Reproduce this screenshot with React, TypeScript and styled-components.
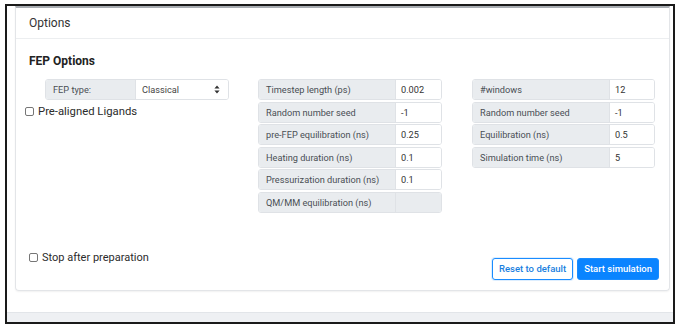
import React from "react";
import styled, { createGlobalStyle } from "styled-components";

const Global = createGlobalStyle`
  html, body { margin: 0; padding: 0; background: #fff; }
  body { font-family: Roboto, "Liberation Sans", sans-serif; color: #212529; }
  * { box-sizing: border-box; }
`;

const Frame = styled.div`
  margin: 4px 4px 0 5px;
  width: 670px;
  height: 320px;
  border: 2px solid #1a1a1a;
  background: #fff;
  display: flex;
  flex-direction: column;
  overflow: hidden;
`;

const Card = styled.div`
  margin: 0 3px 0 8px;
  border: 1px solid #e3e5e8;
  border-top: 2px solid #a9adb2;
  border-radius: 0 0 4px 4px;
  box-shadow: 0 1px 2px rgba(0, 0, 0, 0.06);
  display: flex;
  flex-direction: column;
`;

const CardHeader = styled.div`
  height: 31px;
  padding: 0 13px;
  display: flex;
  align-items: center;
  font-size: 12px;
  color: #333;
  border-bottom: 1px solid #eceef0;
`;

const CardBody = styled.div`
  padding: 15px 13px 10px 13px;
  display: flex;
  flex-direction: column;
`;

const Title = styled.div`
  font-size: 12px;
  font-weight: 700;
  color: #222;
  height: 15px;
  line-height: 15px;
  margin-bottom: 10px;
`;

const Columns = styled.div`
  display: flex;
  align-items: flex-start;
`;

const Column = styled.div<{ $w: number; $ml?: number }>`
  width: ${(p) => p.$w}px;
  margin-left: ${(p) => p.$ml ?? 0}px;
  display: flex;
  flex-direction: column;
  gap: 1.5px;
`;

const SelectGroup = styled.div`
  margin-left: 16px;
  width: 184px;
  height: 21px;
  display: flex;
  border: 1px solid #dfe2e6;
  border-radius: 3px;
  overflow: hidden;
  font-size: 9.2px;
`;

const GroupLabel = styled.div<{ $w: number; $pl?: number }>`
  width: ${(p) => p.$w}px;
  flex: none;
  background: #e9ecef;
  color: #4a4f55;
  display: flex;
  align-items: center;
  padding-left: ${(p) => p.$pl ?? 7}px;
  white-space: nowrap;
`;

const SelectBox = styled.div`
  flex: 1;
  background: #fff;
  display: flex;
  align-items: center;
  justify-content: space-between;
  padding: 0 8px 0 6px;
  color: #444;
  border-left: 1px solid #dfe2e6;
`;

const Arrows = styled.svg`
  width: 6px;
  height: 9px;
`;

const InputRow = styled.div`
  height: 21px;
  display: flex;
  border: 1px solid #dfe2e6;
  border-radius: 3px;
  overflow: hidden;
  font-size: 9.2px;
`;

const InputCell = styled.div<{ $disabled?: boolean }>`
  flex: 1;
  display: flex;
  align-items: center;
  padding-left: 5px;
  color: #333;
  background: ${(p) => (p.$disabled ? "#e9ecef" : "#fff")};
  border-left: 1px solid #dfe2e6;
`;

const Check = styled.label<{ $ml?: number; $fs?: number }>`
  display: flex;
  align-items: center;
  gap: 4px;
  margin-left: ${(p) => p.$ml ?? 0}px;
  font-size: ${(p) => p.$fs ?? 11}px;
  color: #2b2b2b;
  height: 14px;
`;

const Box = styled.span`
  width: 9px;
  height: 9px;
  border: 1px solid #767676;
  border-radius: 2px;
  background: #fff;
  flex: none;
`;

const Footer = styled.div`
  margin-top: 38px;
  display: flex;
  justify-content: space-between;
  align-items: flex-start;
`;

const Buttons = styled.div`
  display: flex;
  gap: 4px;
  margin-top: 7px;
  margin-right: -3px;
`;

const Button = styled.button<{ $primary?: boolean }>`
  height: 22px;
  padding: 0 6px;
  font-family: Roboto, "Liberation Sans", sans-serif;
  font-size: 9.5px;
  font-weight: 500;
  border-radius: 3px;
  border: 1px solid #1a8cff;
  background: ${(p) => (p.$primary ? "#0a84ff" : "#fff")};
  color: ${(p) => (p.$primary ? "#fff" : "#1a7fe0")};
  box-shadow: ${(p) => (p.$primary ? "none" : "0 0 0 1px rgba(26,140,255,0.15)")};
`;

const Spacer = styled.div`
  flex: 1;
`;

const BottomBand = styled.div`
  height: 10px;
  background: #eef0f3;
  border-top: 1px solid #e2e5e9;
`;

const mid: [string, string, boolean?][] = [
  ["Timestep length (ps)", "0.002"],
  ["Random number seed", "-1"],
  ["pre-FEP equilibration (ns)", "0.25"],
  ["Heating duration (ns)", "0.1"],
  ["Pressurization duration (ns)", "0.1"],
  ["QM/MM equilibration (ns)", "", true],
];

const right: [string, string][] = [
  ["#windows", "12"],
  ["Random number seed", "-1"],
  ["Equilibration (ns)", "0.5"],
  ["Simulation time (ns)", "5"],
];

export default function App() {
  return (
    <>
      <Global />
      <Frame>
        <Card>
          <CardHeader>Options</CardHeader>
          <CardBody>
            <Title>FEP Options</Title>
            <Columns>
              <Column $w={199}>
                <SelectGroup>
                  <GroupLabel $w={89} $pl={7}>FEP type:</GroupLabel>
                  <SelectBox>
                    <span>Classical</span>
                    <Arrows viewBox="0 0 6 9">
                      <path d="M3 0.5 L5.6 3.6 H0.4 Z M3 8.5 L5.6 5.4 H0.4 Z" fill="#333" />
                    </Arrows>
                  </SelectBox>
                </SelectGroup>
                <Check $ml={-4} $fs={11.3} style={{ marginTop: 3 }}>
                  <Box />
                  Pre-aligned Ligands
                </Check>
              </Column>
              <Column $w={184} $ml={30}>
                {mid.map(([l, v, d]) => (
                  <InputRow key={l}>
                    <GroupLabel $w={136}>{l}</GroupLabel>
                    <InputCell $disabled={d}>{v}</InputCell>
                  </InputRow>
                ))}
              </Column>
              <Column $w={183} $ml={30}>
                {right.map(([l, v]) => (
                  <InputRow key={l}>
                    <GroupLabel $w={136}>{l}</GroupLabel>
                    <InputCell>{v}</InputCell>
                  </InputRow>
                ))}
              </Column>
            </Columns>
            <Footer>
              <Check>
                <Box />
                Stop after preparation
              </Check>
              <Buttons>
                <Button>Reset to default</Button>
                <Button $primary>Start simulation</Button>
              </Buttons>
            </Footer>
          </CardBody>
        </Card>
        <Spacer />
        <BottomBand />
      </Frame>
    </>
  );
}
